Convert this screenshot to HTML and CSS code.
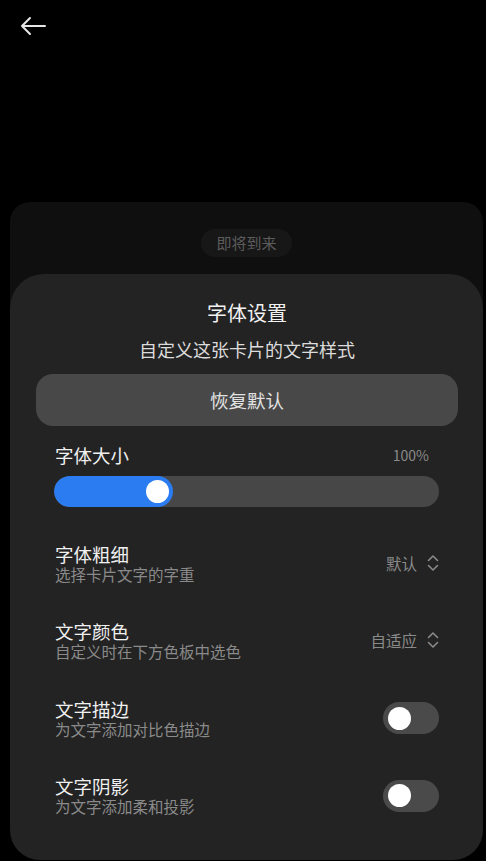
FILE: index.html
```html
<!DOCTYPE html>
<html lang="zh-CN">
<head>
<meta charset="utf-8">
<link rel="stylesheet" href="styles.css">
</head>
<body>
<header class="topbar">
  <svg class="back" width="26" height="20" viewBox="0 0 26 20"><path d="M2 10 H25 M10 2 L2 10 L10 18" fill="none" stroke="#e6e6e6" stroke-width="2" stroke-linecap="round" stroke-linejoin="round"/></svg>
</header>
<main class="preview">
  <span class="pill">即将到来</span>
</main>
<section class="sheet">
  <h1 class="title">字体设置</h1>
  <p class="subtitle">自定义这张卡片的文字样式</p>
  <button class="reset">恢复默认</button>
  <div class="size-head">
    <span class="label">字体大小</span>
    <span class="pct">100%</span>
  </div>
  <div class="track">
    <div class="fill" style="width:119px"><span class="thumb"></span></div>
  </div>
  <div class="row">
    <div class="texts"><div class="label">字体粗细</div><div class="sub">选择卡片文字的字重</div></div>
    <div class="value">默认<svg width="12" height="18" viewBox="0 0 12 18"><path d="M1.5 6.5 L6 2 L10.5 6.5 M1.5 11.5 L6 16 L10.5 11.5" fill="none" stroke="#8a8a8a" stroke-width="1.6" stroke-linecap="round" stroke-linejoin="round"/></svg></div>
  </div>
  <div class="row">
    <div class="texts"><div class="label">文字颜色</div><div class="sub">自定义时在下方色板中选色</div></div>
    <div class="value">自适应<svg width="12" height="18" viewBox="0 0 12 18"><path d="M1.5 6.5 L6 2 L10.5 6.5 M1.5 11.5 L6 16 L10.5 11.5" fill="none" stroke="#8a8a8a" stroke-width="1.6" stroke-linecap="round" stroke-linejoin="round"/></svg></div>
  </div>
  <div class="row">
    <div class="texts"><div class="label">文字描边</div><div class="sub">为文字添加对比色描边</div></div>
    <span class="toggle"><span class="knob"></span></span>
  </div>
  <div class="row">
    <div class="texts"><div class="label">文字阴影</div><div class="sub">为文字添加柔和投影</div></div>
    <span class="toggle"><span class="knob"></span></span>
  </div>
</section>
</body>
</html>
```
FILE: styles.css
```css
* { box-sizing: border-box; }
html, body { margin: 0; padding: 0; background: #000; }
body {
  font-family: "Noto Sans CJK SC", "Noto Sans", sans-serif;
  color: #eee;
  height: 861px;
  overflow: hidden;
}
.topbar {
  height: 52px;
  display: flex;
  align-items: center;
  padding-left: 20px;
}
.back { display: block; }
.preview {
  margin: 150px 3px 0 10px;
  height: 320px;
  background: #0f0f0f;
  border-radius: 20px;
  padding-top: 27px;
  display: flex;
  flex-direction: column;
  align-items: center;
}
.pill {
  height: 28px;
  line-height: 28px;
  padding: 0 15px;
  border-radius: 14px;
  background: #171717;
  color: #5c5c5c;
  font-size: 15px;
}
.sheet {
  position: fixed;
  left: 10px;
  right: 3px;
  top: 274px;
  bottom: 1px;
  background: #232323;
  border-radius: 34px 34px 30px 30px;
  padding: 25px 44px 0 45px;
  display: flex;
  flex-direction: column;
}
.title {
  margin: 0;
  text-align: center;
  font-size: 20px;
  line-height: 28px;
  font-weight: 400;
  color: #f2f2f2;
}
.subtitle {
  margin: 10px 0 0;
  text-align: center;
  font-size: 18px;
  line-height: 25px;
  color: #dcdcdc;
}
.reset {
  margin: 12px -19px 0 -19px;
  height: 52px;
  border: none;
  border-radius: 17px;
  background: #484848;
  color: #e2e2e2;
  font-family: inherit;
  font-size: 18.5px;
}
.size-head {
  margin-top: 16px;
  height: 26px;
  display: flex;
  align-items: center;
  justify-content: space-between;
  padding-right: 10px;
}
.label {
  font-size: 18.5px;
  line-height: 19px;
  color: #f0f0f0;
}
.pct {
  font-size: 14px;
  color: #8a8a8a;
}
.track {
  margin: 8px 0 0 -1px;
  height: 31px;
  border-radius: 16px;
  background: #474747;
  overflow: hidden;
}
.fill {
  height: 100%;
  background: #2b7cf0;
  border-radius: 16px;
  display: flex;
  align-items: center;
  justify-content: flex-end;
  padding-right: 4px;
}
.thumb {
  width: 23px;
  height: 23px;
  border-radius: 50%;
  background: #fff;
}
.row {
  height: 77.3px;
  display: flex;
  align-items: center;
  justify-content: space-between;
}
.track + .row { margin-top: 18px; }
.sub {
  margin-top: 2px;
  font-size: 15.5px;
  line-height: 16px;
  color: #8a8a8a;
}
.value {
  display: flex;
  align-items: center;
  gap: 10px;
  font-size: 15.5px;
  color: #8a8a8a;
  margin-top: -1px;
}
.value svg { display: block; }
.toggle {
  width: 56px;
  height: 32px;
  border-radius: 16px;
  background: #4a4a4a;
  display: flex;
  align-items: center;
  padding-left: 4.5px;
}
.knob {
  width: 23px;
  height: 23px;
  border-radius: 50%;
  background: #fff;
}
```
